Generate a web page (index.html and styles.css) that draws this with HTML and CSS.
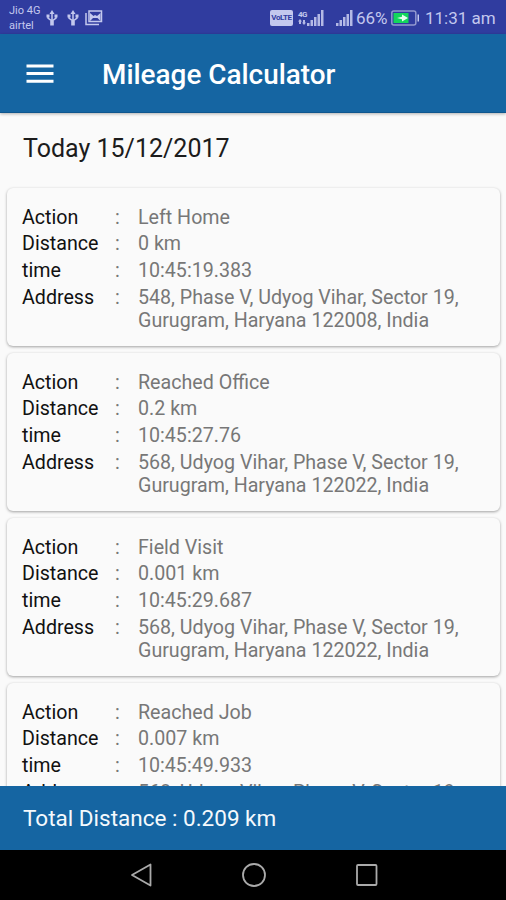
FILE: index.html
```html
<!DOCTYPE html>
<html lang="en">
<head>
  <meta charset="UTF-8" />
  <meta name="viewport" content="width=device-width, initial-scale=1.0"/>
  <title>Mileage Calculator</title>
  <link rel="stylesheet" href="styles.css">
</head>
<body>
  <div class="status-bar">
    <div class="carriers"><span>Jio 4G</span><span>airtel</span></div>
    <svg class="usb" width="12" height="16" viewBox="0 0 12 16"><path d="M6 2v12M2 6v2l4 3 4-3V6" /><path class="fill" d="M6 0l2.500 4h-5zM.5 4.500h3v3h-3zM8.500 4.500h3v3h-3zM4.200 11h3.600v4.500H4.200z" /></svg>
    <svg class="usb" width="12" height="16" viewBox="0 0 12 16"><path d="M6 2v12M2 6v2l4 3 4-3V6" /><path class="fill" d="M6 0l2.500 4h-5zM.5 4.500h3v3h-3zM8.500 4.500h3v3h-3zM4.200 11h3.600v4.500H4.200z" /></svg>
    <svg class="gallery" width="18" height="16" viewBox="0 0 18 16"><path d="M1 3v11.500h13M4 1h12.500v10.500H4z" /><path class="fill" d="M5 11V3l3.500 3L10 5l2 1 3.500-3v8l-3-3H8z" /></svg>

    <div class="status-right">
      <span class="volte">VoLTE</span>
      <div class="network"><span>4G</span><svg width="9" height="6" viewBox="0 0 9 6"><path d="M2 0l2 2.500H3V5H1V2.500H0zM5 1h2v2.500h1L6 6 4 3.500h1z" /></svg></div>
      <svg class="signal" width="17" height="16" viewBox="0 0 17 16"><path d="M0 13h2.500v3H0zM3.500 10H6v6H3.500zM7 7h2.500v9H7zM10.500 4H13v12h-2.500zM14 0h2.500v16H14z" /></svg>
      <svg class="signal second" width="17" height="16" viewBox="0 0 17 16"><path d="M0 13h2.500v3H0zM3.500 10H6v6H3.500zM7 7h2.500v9H7zM10.500 4H13v12h-2.500zM14 0h2.500v16H14z" /></svg>
      <span class="percent">66%</span>
      <svg class="battery" width="29" height="16" viewBox="0 0 29 16"><rect class="case" x=".8" y="1" width="24" height="14" rx="2" /><rect class="level" x="2.500" y="3" width="15" height="10" /><path class="tip" d="M26.500 4.500h1.500v7h-1.500z" /><path class="bolt" d="M6 8l5-1.200V4.500l6 3.500-6 3.500V9.200z" /></svg>
      <span class="clock">11:31 am</span>
    </div>
  </div>

  <header class="toolbar">
    <svg width="28" height="20" viewBox="0 0 28 20"><path d="M.5 2h27M.5 9.500h27M.5 17.300h27" /></svg>
    <h1>Mileage Calculator</h1>
  </header>

  <main class="content">
    <h2>Today 15/12/2017</h2>

    <div class="card">
      <div class="row"><span class="label">Action</span><span>:</span><span>Left Home</span></div>
      <div class="row"><span class="label">Distance</span><span>:</span><span>0 km</span></div>
      <div class="row"><span class="label">time</span><span>:</span><span>10:45:19.383</span></div>
      <div class="row"><span class="label">Address</span><span>:</span><span>548, Phase V, Udyog Vihar, Sector 19,<br>Gurugram, Haryana 122008, India</span></div>
    </div>

    <div class="card">
      <div class="row"><span class="label">Action</span><span>:</span><span>Reached Office</span></div>
      <div class="row"><span class="label">Distance</span><span>:</span><span>0.2 km</span></div>
      <div class="row"><span class="label">time</span><span>:</span><span>10:45:27.76</span></div>
      <div class="row"><span class="label">Address</span><span>:</span><span>568, Udyog Vihar, Phase V, Sector 19,<br>Gurugram, Haryana 122022, India</span></div>
    </div>

    <div class="card">
      <div class="row"><span class="label">Action</span><span>:</span><span>Field Visit</span></div>
      <div class="row"><span class="label">Distance</span><span>:</span><span>0.001 km</span></div>
      <div class="row"><span class="label">time</span><span>:</span><span>10:45:29.687</span></div>
      <div class="row"><span class="label">Address</span><span>:</span><span>568, Udyog Vihar, Phase V, Sector 19,<br>Gurugram, Haryana 122022, India</span></div>
    </div>

    <div class="card">
      <div class="row"><span class="label">Action</span><span>:</span><span>Reached Job</span></div>
      <div class="row"><span class="label">Distance</span><span>:</span><span>0.007 km</span></div>
      <div class="row"><span class="label">time</span><span>:</span><span>10:45:49.933</span></div>
      <div class="row"><span class="label">Address</span><span>:</span><span>568, Udyog Vihar, Phase V, Sector 19,</span></div>
    </div>
  </main>

  <footer class="total">Total Distance : 0.209 km</footer>

  <nav class="nav-bar">
    <svg width="24" height="26" viewBox="0 0 24 26"><path d="M21.500 2.500v21L3 13z" /></svg>
    <svg width="26" height="26" viewBox="0 0 26 26"><circle cx="13" cy="13" r="11" /></svg>
    <svg width="24" height="26" viewBox="0 0 24 26"><rect x="2" y="3" width="19.500" height="20" rx="1" /></svg>
  </nav>
</body>
</html>
```

FILE: styles.css
```css
* {
  box-sizing: border-box;
}
body {
  margin: 0;
  height: 100vh;
  display: flex;
  flex-direction: column;
  overflow: hidden;
  font-family: Roboto, sans-serif;
  background: #fafafa;
}
svg {
  display: block;
  flex: none;
}

/* status bar */
.status-bar {
  height: 34px;
  flex: none;
  display: flex;
  align-items: center;
  padding: 1px 11px 0 9px;
  background: #303c9f;
  color: #c3c8ee;
  white-space: nowrap;
}
.carriers {
  display: flex;
  flex-direction: column;
  width: 37px;
  font-size: 11px;
  line-height: 15px;
  padding-top: 1px;
}
.usb {
  margin-right: 9px;
}
.usb path,
.gallery path {
  fill: none;
  stroke: #c3c8ee;
  stroke-width: 1.5;
}
.usb .fill,
.gallery .fill {
  fill: #c3c8ee;
  stroke: none;
}
.gallery {
  margin-left: -3px;
}
.status-right {
  display: flex;
  align-items: center;
  margin-left: auto;
}
.volte {
  width: 23px;
  height: 16px;
  border-radius: 2px;
  background: #c3c8ee;
  color: #303c9f;
  font-size: 8px;
  font-weight: bold;
  line-height: 16px;
  text-align: center;
  letter-spacing: -0.4px;
}
.network {
  display: flex;
  flex-direction: column;
  width: 9px;
  margin-left: 5px;
  font-size: 8px;
  font-weight: bold;
  line-height: 9px;
  letter-spacing: -0.5px;
}
.network svg,
.signal {
  fill: #b4b9e5;
}
.second {
  margin-left: 12px;
}
.percent {
  width: 33px;
  margin-left: 3px;
  font-size: 17px;
}
.battery {
  margin-left: 2px;
}
.battery .case {
  fill: none;
  stroke: #9298cf;
  stroke-width: 1.5;
}
.battery .level {
  fill: #13d65c;
}
.battery .tip {
  fill: #c3c8ee;
}
.battery .bolt {
  fill: #e5ffef;
}
.clock {
  width: 70px;
  margin-left: 5px;
  font-size: 17px;
}

/* toolbar */
.toolbar {
  height: 79px;
  flex: none;
  display: flex;
  align-items: center;
  gap: 48px;
  padding: 2px 0 0 26px;
  background: #1565a2;
  border-bottom: 1px solid #0f568e;
  box-shadow: 0 1px 3px rgba(0, 0, 0, 0.3);
}
.toolbar path {
  stroke: #fff;
  stroke-width: 3;
}
.toolbar h1 {
  margin: 0;
  color: #fff;
  font-size: 27.900px;
  font-weight: 500;
}

/* trips */
.content {
  flex: 1;
  min-height: 0;
  overflow: hidden;
}
h2 {
  margin: 0;
  height: 75px;
  padding: 21px 23px 0;
  color: #1c1c1c;
  font-size: 25px;
  font-weight: 400;
  line-height: 30px;
}
.card {
  height: 158px;
  margin: 0 6px 7px 7px;
  padding: 17.600px 15px 0;
  border-radius: 6px;
  background: #fafafa;
  box-shadow: 0 1px 3px rgba(0, 0, 0, 0.36);
}
.row {
  display: grid;
  grid-template-columns: 93px 23px 1fr;
  margin-bottom: 3.700px;
  color: #777;
  font-size: 19.650px;
  line-height: 23px;
  white-space: nowrap;
}
.label {
  color: #111;
}

.total {
  height: 64px;
  flex: none;
  padding-left: 23px;
  background: #1565a2;
  color: #f4f9fd;
  font-size: 22.500px;
  line-height: 65px;
}

/* android navigation */
.nav-bar {
  height: 50px;
  flex: none;
  display: flex;
  align-items: center;
  justify-content: center;
  gap: 88px;
  padding-left: 1px;
  background: #000;
}
.nav-bar svg {
  fill: none;
  stroke: #aaa;
  stroke-width: 1.800;
  stroke-linejoin: round;
}
```
